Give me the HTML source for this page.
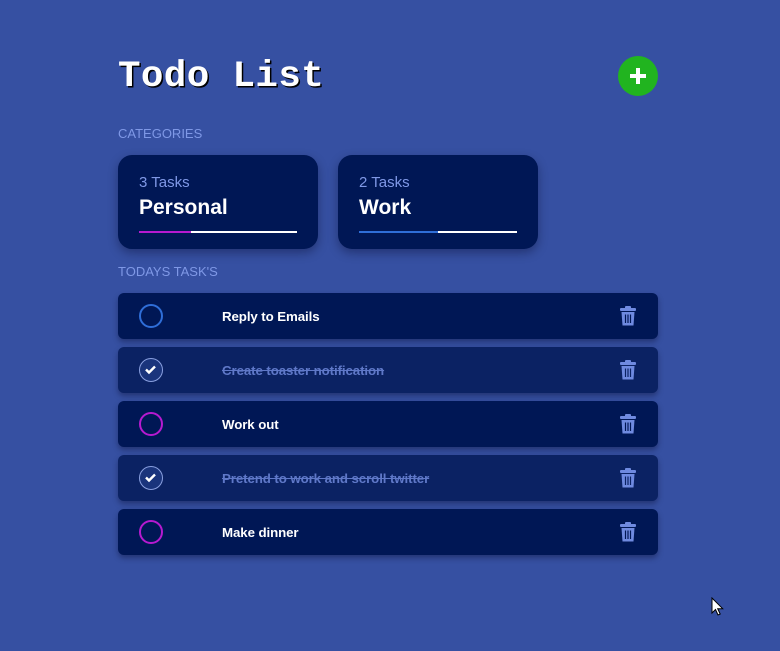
<!DOCTYPE html>
<html><head><style>
*{margin:0;padding:0;box-sizing:border-box}
body{width:780px;height:651px;background:#3650a2;font-family:"Liberation Sans",sans-serif;position:relative;overflow:hidden}
h1{position:absolute;left:118px;top:56px;font-family:"Liberation Mono",monospace;font-weight:bold;font-size:37.5px;color:#fff;text-shadow:1.5px 1.5px 0 #000;letter-spacing:0.4px}
.add{position:absolute;left:618px;top:56px;width:40px;height:40px;border-radius:50%;background:#21b41f}
.add:before{content:"";position:absolute;left:12px;top:18px;width:16px;height:4px;background:#fff}
.add:after{content:"";position:absolute;left:18px;top:12px;width:4px;height:16px;background:#fff}
.lbl{position:absolute;left:118px;font-size:13px;color:#7f98e6}
.card{position:absolute;top:155px;width:200px;height:94px;border-radius:14px;background:#001755;box-shadow:0 4px 10px rgba(0,0,30,.35)}
.card .n{position:absolute;left:21px;top:19px;font-size:15px;color:#7f98e6}
.card .t{position:absolute;left:21px;top:41px;font-size:21px;font-weight:bold;color:#fff}
.bar{position:absolute;left:21px;top:76px;width:158px;height:2px;background:#fff}
.bar i{position:absolute;left:0;top:0;height:2px}
.row{position:absolute;left:118px;width:540px;height:46px;border-radius:6px;background:#001755;box-shadow:0 3px 6px rgba(0,0,30,.35)}
.row.d{background:#0b2263}
.c{position:absolute;left:21px;top:11px;width:24px;height:24px;border-radius:50%;border:2.5px solid}
.row.d .c{border:1.5px solid #8aa0e0;background:#1a347c}
.row .tx{position:absolute;left:104px;top:16px;font-size:13.3px;font-weight:bold;color:#fff;letter-spacing:-0.1px}
.row.d .tx{color:#5f78c8;text-decoration:line-through}
.tr{position:absolute;left:501px;top:13px}
</style></head><body>
<h1>Todo List</h1>
<div class="add"></div>
<div class="lbl" style="top:126px">CATEGORIES</div>
<div class="card" style="left:118px"><div class="n">3 Tasks</div><div class="t">Personal</div><div class="bar"><i style="width:52px;background:#b61ad0"></i></div></div>
<div class="card" style="left:338px"><div class="n">2 Tasks</div><div class="t">Work</div><div class="bar"><i style="width:79px;background:#2f6ed8"></i></div></div>
<div class="lbl" style="top:264px">TODAYS TASK'S</div>

<div class="row" style="top:293px"><div class="c" style="border-color:#2f6ed8"></div><div class="tx">Reply to Emails</div><svg class="tr" width="18" height="20" viewBox="0 0 18 20"><rect x="1" y="2" width="16" height="3" rx="1" fill="#6f8ae0"/><rect x="6" y="0" width="6" height="3" rx="1" fill="#6f8ae0"/><path d="M2.5 6h13l-1 13.5h-11z" fill="#6f8ae0"/><path d="M6.5 8.5v8.5M9 8.5v8.5M11.5 8.5v8.5" stroke="#001755" stroke-width="1.2"/></svg></div>

<div class="row d" style="top:347px"><div class="c"><svg width="21" height="21" viewBox="0 0 21 21" style="position:absolute;left:0;top:0"><path d="M6 10.5l3 3 6-6" stroke="#fff" stroke-width="2.4" fill="none"/></svg></div><div class="tx">Create toaster notification</div><svg class="tr" width="18" height="20" viewBox="0 0 18 20"><rect x="1" y="2" width="16" height="3" rx="1" fill="#6f8ae0"/><rect x="6" y="0" width="6" height="3" rx="1" fill="#6f8ae0"/><path d="M2.5 6h13l-1 13.5h-11z" fill="#6f8ae0"/><path d="M6.5 8.5v8.5M9 8.5v8.5M11.5 8.5v8.5" stroke="#0b2263" stroke-width="1.2"/></svg></div>

<div class="row" style="top:401px"><div class="c" style="border-color:#b61ad0"></div><div class="tx">Work out</div><svg class="tr" width="18" height="20" viewBox="0 0 18 20"><rect x="1" y="2" width="16" height="3" rx="1" fill="#6f8ae0"/><rect x="6" y="0" width="6" height="3" rx="1" fill="#6f8ae0"/><path d="M2.5 6h13l-1 13.5h-11z" fill="#6f8ae0"/><path d="M6.5 8.5v8.5M9 8.5v8.5M11.5 8.5v8.5" stroke="#001755" stroke-width="1.2"/></svg></div>

<div class="row d" style="top:455px"><div class="c"><svg width="21" height="21" viewBox="0 0 21 21" style="position:absolute;left:0;top:0"><path d="M6 10.5l3 3 6-6" stroke="#fff" stroke-width="2.4" fill="none"/></svg></div><div class="tx">Pretend to work and scroll twitter</div><svg class="tr" width="18" height="20" viewBox="0 0 18 20"><rect x="1" y="2" width="16" height="3" rx="1" fill="#6f8ae0"/><rect x="6" y="0" width="6" height="3" rx="1" fill="#6f8ae0"/><path d="M2.5 6h13l-1 13.5h-11z" fill="#6f8ae0"/><path d="M6.5 8.5v8.5M9 8.5v8.5M11.5 8.5v8.5" stroke="#0b2263" stroke-width="1.2"/></svg></div>

<div class="row" style="top:509px"><div class="c" style="border-color:#b61ad0"></div><div class="tx">Make dinner</div><svg class="tr" width="18" height="20" viewBox="0 0 18 20"><rect x="1" y="2" width="16" height="3" rx="1" fill="#6f8ae0"/><rect x="6" y="0" width="6" height="3" rx="1" fill="#6f8ae0"/><path d="M2.5 6h13l-1 13.5h-11z" fill="#6f8ae0"/><path d="M6.5 8.5v8.5M9 8.5v8.5M11.5 8.5v8.5" stroke="#001755" stroke-width="1.2"/></svg></div>

<svg style="position:absolute;left:711px;top:597px" width="14" height="20" viewBox="0 0 14 20"><path d="M1 1v15l3.5-3.5 2.5 5.5 2.2-1-2.5-5.3h5z" fill="#fff" stroke="#000" stroke-width="1"/></svg>
</body></html>
